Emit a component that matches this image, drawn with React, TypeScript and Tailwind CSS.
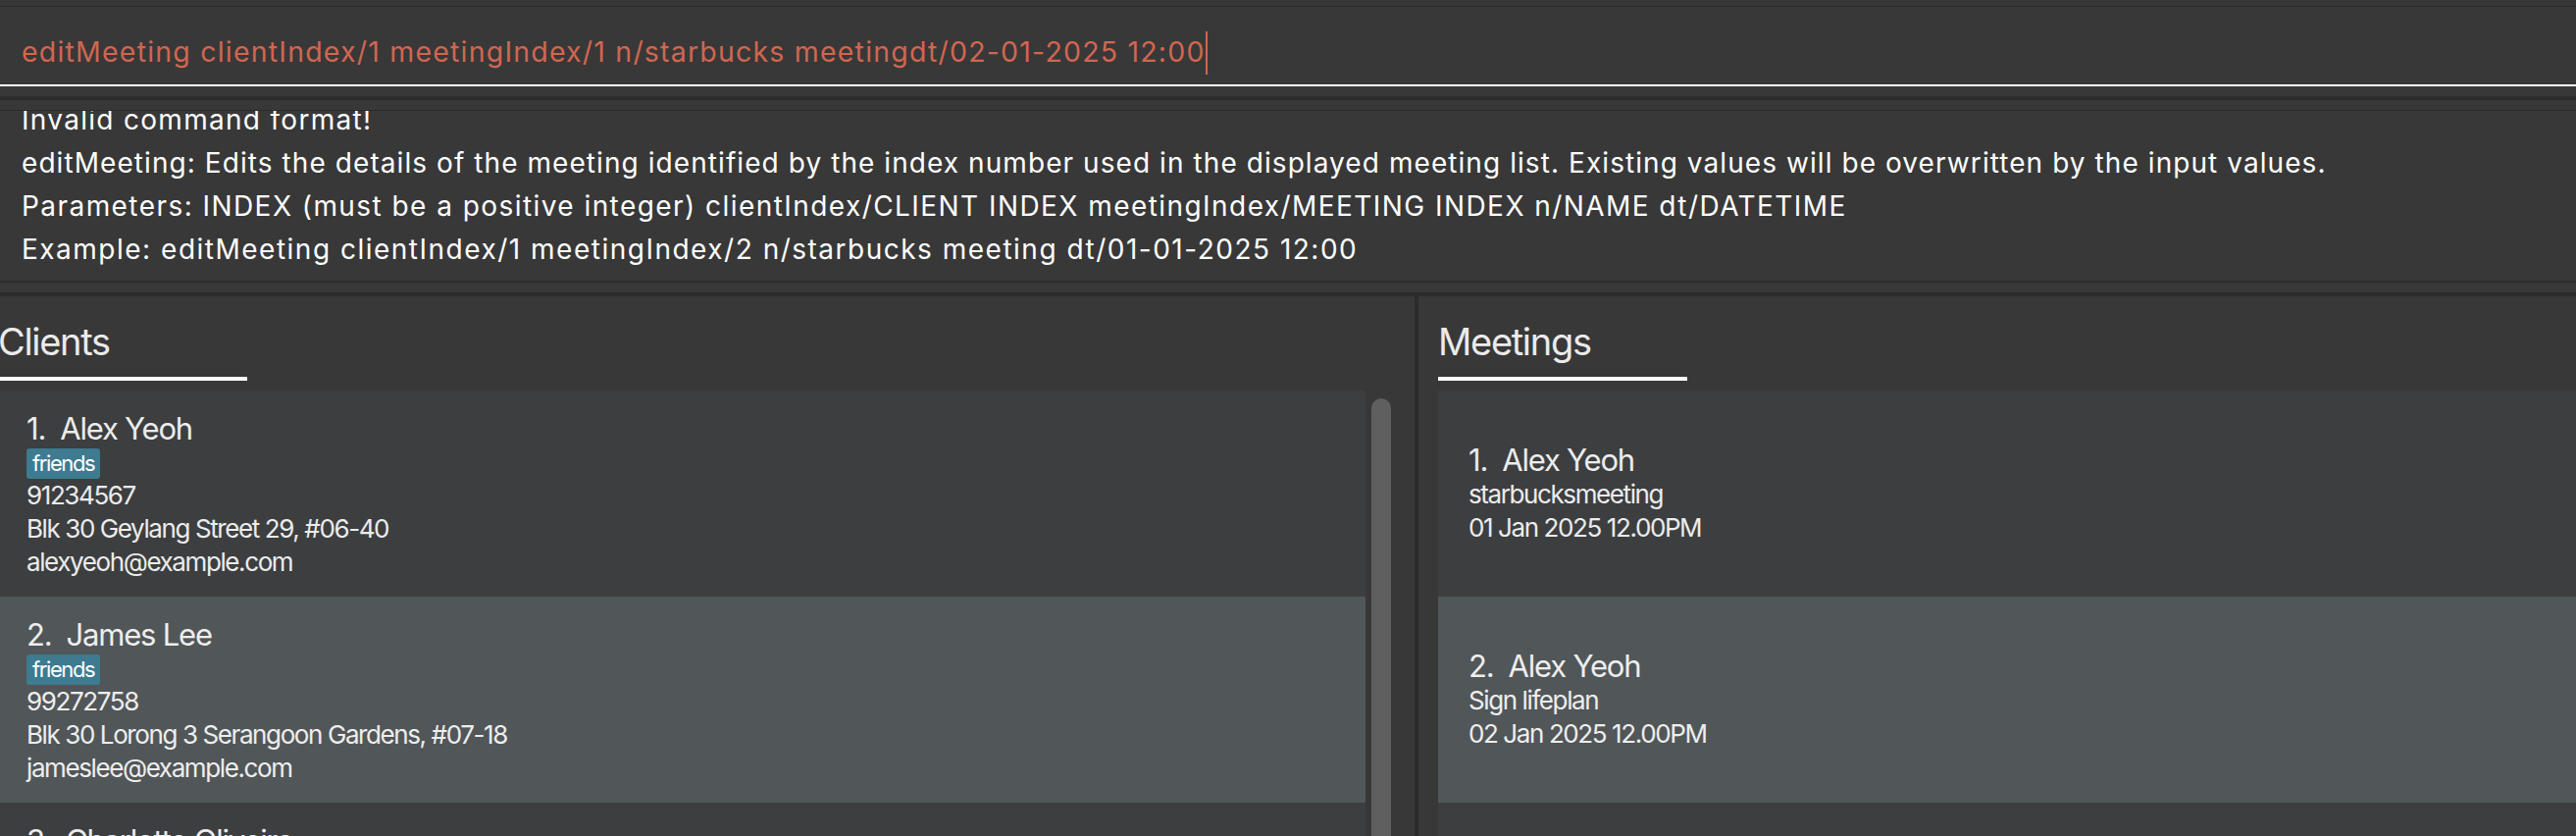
import React from "react";

const clients = [
  {
    name: "Alex Yeoh",
    tags: ["friends"],
    phone: "91234567",
    address: "Blk 30 Geylang Street 29, #06-40",
    email: "alexyeoh@example.com",
  },
  {
    name: "James Lee",
    tags: ["friends"],
    phone: "99272758",
    address: "Blk 30 Lorong 3 Serangoon Gardens, #07-18",
    email: "jameslee@example.com",
  },
  {
    name: "Charlotte Oliveiro",
    tags: ["neighbours"],
    phone: "93210283",
    address: "Blk 11 Ang Mo Kio Street 74, #11-04",
    email: "charlotte@example.com",
  },
];

const meetings = [
  { client: "Alex Yeoh", title: "starbucksmeeting", when: "01 Jan 2025 12.00PM" },
  { client: "Alex Yeoh", title: "Sign lifeplan", when: "02 Jan 2025 12.00PM" },
];

// letter spacing differs per line so widths track the original renderer
const resultLines = [
  { text: "Invalid command format!", tracking: "tracking-[1.3px]" },
  {
    text: "editMeeting: Edits the details of the meeting identified by the index number used in the displayed meeting list. Existing values will be overwritten by the input values.",
    tracking: "tracking-[1.07px]",
  },
  {
    text: "Parameters: INDEX (must be a positive integer) clientIndex/CLIENT INDEX meetingIndex/MEETING INDEX n/NAME dt/DATETIME",
    tracking: "tracking-[1.44px]",
  },
  {
    text: "Example: editMeeting clientIndex/1 meetingIndex/2 n/starbucks meeting dt/01-01-2025 12:00",
    tracking: "tracking-[1.5px]",
  },
];

function cardBg(i: number) {
  return i % 2 === 0 ? "bg-[#3c3e3f]" : "bg-[#515658]";
}

function PanelHeader({ title, className }: { title: string; className?: string }) {
  return (
    <div className={className}>
      <h2 className="h-[46px] text-[38px] leading-[46px] font-normal tracking-[-1.3px] whitespace-pre text-white/90">{title}</h2>
      <div className="mt-[13px] h-[4px] w-[254px] bg-white" />
    </div>
  );
}

export default function App() {
  return (
    <div
      className="flex h-[852px] w-[2626px] flex-col overflow-hidden bg-[#383838] text-white"
      style={{ fontFamily: "Inter, 'Noto Sans', sans-serif" }}
    >
      {/* command box */}
      <div className="h-[6px] shrink-0" />
      <div className="h-[1px] shrink-0 bg-[#2b2b2b]" />
      <div className="h-[81px] shrink-0 border-b-2 border-white pt-[24px] pl-[22px]">
        <div className="flex h-[44px] items-start text-[28.5px] leading-[44px] tracking-[1.2px] whitespace-pre text-[#d06651]">
          <span>editMeeting clientIndex/1 meetingIndex/1 n/starbucks meetingdt/02-01-2025 12:00</span>
          <span className="mt-[1px] inline-block h-[44px] w-[2px] bg-[#d06651]" />
        </div>
      </div>

      <div className="h-[10px] shrink-0" />
      <div className="h-[4px] shrink-0 bg-[#2b2b2b]" />
      <div className="h-[10px] shrink-0" />
      <div className="h-[1px] shrink-0 bg-[#2b2b2b]" />

      {/* result display */}
      <div className="h-[173px] shrink-0 overflow-hidden pl-[22px]">
        <div className="mt-[-13px] text-[28px] leading-[44px] whitespace-pre text-white">
          {resultLines.map((line) => (
            <div key={line.text} className={line.tracking}>
              {line.text}
            </div>
          ))}
        </div>
      </div>
      <div className="h-[2px] shrink-0 bg-[#2b2b2b]" />
      <div className="h-[10px] shrink-0" />
      <div className="h-[4px] shrink-0 bg-[#2b2b2b]" />

      {/* lists */}
      <div className="flex min-h-0 flex-1">
        <div className="flex w-[1442px] shrink-0 flex-col overflow-hidden pt-[23px]">
          <PanelHeader title="Clients" className="ml-[-2px]" />
          <div className="mt-[10px] flex min-h-0 flex-1">
            <div className="flex w-[1392px] flex-col">
              {clients.map((c, i) => (
                <div key={c.name} className={`flex h-[210px] shrink-0 flex-col pt-[21px] pl-[27px] text-white/90 ${cardBg(i)}`}>
                  <div className="h-[36px] text-[31px] leading-[36px] tracking-[-1.2px] whitespace-pre">
                    {i + 1}.  {c.name}
                  </div>
                  <div className="mt-[2px] flex h-[31px] gap-2">
                    {c.tags.map((t) => (
                      <span key={t} className="rounded-[3px] bg-[#3e7b91] px-[6px] text-[22px] leading-[31px] tracking-[-1.4px] text-white">
                        {t}
                      </span>
                    ))}
                  </div>
                  <div className="text-[26px] leading-[34px] tracking-[-1.4px]">{c.phone}</div>
                  <div className="text-[26px] leading-[34px] tracking-[-1.4px]">{c.address}</div>
                  <div className="text-[26px] leading-[34px] tracking-[-1.4px]">{c.email}</div>
                </div>
              ))}
            </div>
            <div className="ml-[6px] mt-[8px] w-[20px] shrink-0 rounded-t-[10px] bg-[#5f5f5f]" />
          </div>
        </div>

        <div className="w-[4px] shrink-0 bg-[#2b2b2b]" />

        <div className="flex min-w-0 flex-1 flex-col overflow-hidden pt-[23px] pl-[20px]">
          <PanelHeader title="Meetings" />
          <div className="mt-[10px] flex flex-col">
            {meetings.map((m, i) => (
              <div
                key={m.title}
                className={`flex h-[210px] shrink-0 flex-col justify-center pl-[31px] text-white/90 ${cardBg(i)}`}
              >
                <div className="h-[36px] text-[31px] leading-[36px] tracking-[-1.2px] whitespace-pre">
                  {i + 1}.  {m.client}
                </div>
                <div className="text-[26px] leading-[34px] tracking-[-1.4px]">{m.title}</div>
                <div className="text-[26px] leading-[34px] tracking-[-1.4px]">{m.when}</div>
              </div>
            ))}
            <div className="h-[210px] shrink-0 bg-[#3c3e3f]" />
          </div>
        </div>
      </div>
    </div>
  );
}
